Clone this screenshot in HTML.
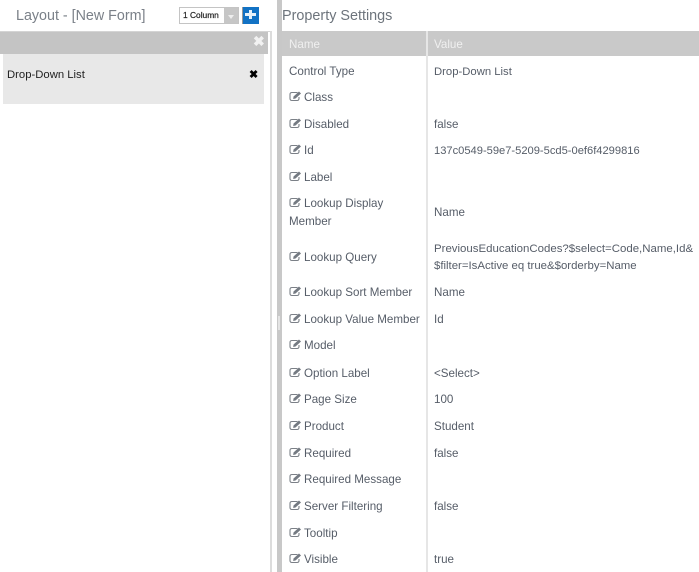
<!DOCTYPE html>
<html><head><meta charset="utf-8"><style>
html,body{margin:0;padding:0;background:#fff}
body{width:699px;height:572px;overflow:hidden;position:relative;font-family:"Liberation Sans",sans-serif;font-size:11.6px;color:#565d68;filter:blur(.3px)}
.a{position:absolute}
.t{position:absolute;white-space:nowrap;line-height:16px;margin-top:1px}
.i{position:absolute;width:13px;height:12px;margin-top:-1px}
</style></head><body>
<svg width="0" height="0" style="position:absolute"><defs><symbol id="e" viewBox="0 0 13 12"><path d="M8.5 2.5H3Q1 2.5 1 4.5V8.5Q1 10.5 3 10.5H8Q10 10.5 10 8.5V7" fill="none" stroke="#7b8087" stroke-width="1.1"/><path d="M4.5 6.5L10 1.5L12 3.5L6.5 8.5L4.2 9Z" fill="#747a82"/></symbol></defs></svg>

<div class="t" style="left:16px;top:5px;font-size:14.3px;line-height:20px;color:#7a8088">Layout - [New Form]</div>
<div class="a" style="left:179px;top:7px;width:60px;height:17px;border:1px solid #c4c4c4;box-sizing:border-box;background:#fff"></div>
<div class="t" style="left:183px;top:7px;font-size:8.4px;color:#222;line-height:15px;-webkit-text-stroke:.2px #222">1 Column</div>
<div class="a" style="left:224px;top:8px;width:14px;height:15px;background:#c6c6c6"></div>
<div class="a" style="left:228px;top:15px;width:0;height:0;border-left:3px solid transparent;border-right:3px solid transparent;border-top:4px solid #eee"></div>
<div class="a" style="left:242px;top:7px;width:1px;height:17px;background:#999"></div>
<div class="a" style="left:243px;top:7px;width:16px;height:17px;background:#1272c4"></div>
<div class="a" style="left:245px;top:13px;width:11px;height:3px;background:#e8f2fa"></div>
<div class="a" style="left:249px;top:10px;width:3px;height:9px;background:#e8f2fa"></div>

<div class="a" style="left:0;top:31px;width:270px;height:1px;background:#d4d4d4"></div>
<div class="a" style="left:0;top:32px;width:268px;height:22px;background:#c4c4c4"></div>
<div class="t" style="left:253px;top:32px;font-size:14px;font-weight:bold;color:#f2f2f2;line-height:16px">✖</div>
<div class="a" style="left:3px;top:54px;width:261px;height:50px;background:#e8e8e8"></div>
<div class="t" style="left:7px;top:66px;color:#222;font-size:11.3px">Drop-Down List</div>
<div class="t" style="left:249px;top:66px;font-size:11px;font-weight:bold;color:#000">✖</div>

<div class="a" style="left:270px;top:31px;width:2px;height:541px;background:#dcdcdc"></div>
<div class="a" style="left:277px;top:0;width:5px;height:572px;background:#c8c8c8"></div>
<div class="a" style="left:278px;top:316px;width:2px;height:14px;background:#e4e4e4"></div>

<div class="t" style="left:282px;top:5px;font-size:14.4px;line-height:20px;color:#6d747c">Property Settings</div>
<div class="a" style="left:282px;top:31px;width:417px;height:25px;background:#c9c9c9"></div>
<div class="a" style="left:426px;top:31px;width:2px;height:541px;background:#e6e6e6"></div>
<div class="t" style="left:289px;top:36px;color:#f0f0f0">Name</div>
<div class="t" style="left:434px;top:36px;color:#f0f0f0">Value</div>

<div class="t" style="left:289px;top:63px">Control Type</div>
<div class="t" style="left:434px;top:63px;font-size:11.3px">Drop-Down List</div>

<svg class="i" style="left:289px;top:91px"><use href="#e"/></svg><div class="t" style="left:304px;top:89px">Class</div>
<svg class="i" style="left:289px;top:118px"><use href="#e"/></svg><div class="t" style="left:304px;top:116px">Disabled</div>
<div class="t" style="left:434px;top:116px">false</div>
<svg class="i" style="left:289px;top:144px"><use href="#e"/></svg><div class="t" style="left:304px;top:142px">Id</div>
<div class="t" style="left:434px;top:142px;font-size:11.15px">137c0549-59e7-5209-5cd5-0ef6f4299816</div>
<svg class="i" style="left:289px;top:171px"><use href="#e"/></svg><div class="t" style="left:304px;top:169px">Label</div>
<svg class="i" style="left:289px;top:197px"><use href="#e"/></svg><div class="t" style="left:304px;top:195px">Lookup Display</div>
<div class="t" style="left:289px;top:213px">Member</div>
<div class="t" style="left:434px;top:204px">Name</div>
<svg class="i" style="left:289px;top:251px"><use href="#e"/></svg><div class="t" style="left:304px;top:249px">Lookup Query</div>
<div class="t" style="left:434px;top:240px;font-size:11.45px">PreviousEducationCodes?$select=Code,Name,Id&amp;</div>
<div class="t" style="left:434px;top:257px;font-size:11.4px">$filter=IsActive eq true&amp;$orderby=Name</div>
<svg class="i" style="left:289px;top:286px"><use href="#e"/></svg><div class="t" style="left:304px;top:284px">Lookup Sort Member</div>
<div class="t" style="left:434px;top:284px">Name</div>
<svg class="i" style="left:289px;top:313px"><use href="#e"/></svg><div class="t" style="left:304px;top:311px">Lookup Value Member</div>
<div class="t" style="left:434px;top:311px">Id</div>
<svg class="i" style="left:289px;top:339px"><use href="#e"/></svg><div class="t" style="left:304px;top:337px">Model</div>
<svg class="i" style="left:289px;top:367px"><use href="#e"/></svg><div class="t" style="left:304px;top:365px">Option Label</div>
<div class="t" style="left:434px;top:365px">&lt;Select&gt;</div>
<svg class="i" style="left:289px;top:393px"><use href="#e"/></svg><div class="t" style="left:304px;top:391px">Page Size</div>
<div class="t" style="left:434px;top:391px">100</div>
<svg class="i" style="left:289px;top:420px"><use href="#e"/></svg><div class="t" style="left:304px;top:418px">Product</div>
<div class="t" style="left:434px;top:418px">Student</div>
<svg class="i" style="left:289px;top:447px"><use href="#e"/></svg><div class="t" style="left:304px;top:445px">Required</div>
<div class="t" style="left:434px;top:445px">false</div>
<svg class="i" style="left:289px;top:473px"><use href="#e"/></svg><div class="t" style="left:304px;top:471px">Required Message</div>
<svg class="i" style="left:289px;top:500px"><use href="#e"/></svg><div class="t" style="left:304px;top:498px">Server Filtering</div>
<div class="t" style="left:434px;top:498px">false</div>
<svg class="i" style="left:289px;top:527px"><use href="#e"/></svg><div class="t" style="left:304px;top:525px">Tooltip</div>
<svg class="i" style="left:289px;top:553px"><use href="#e"/></svg><div class="t" style="left:304px;top:551px">Visible</div>
<div class="t" style="left:434px;top:551px">true</div>
</body></html>
